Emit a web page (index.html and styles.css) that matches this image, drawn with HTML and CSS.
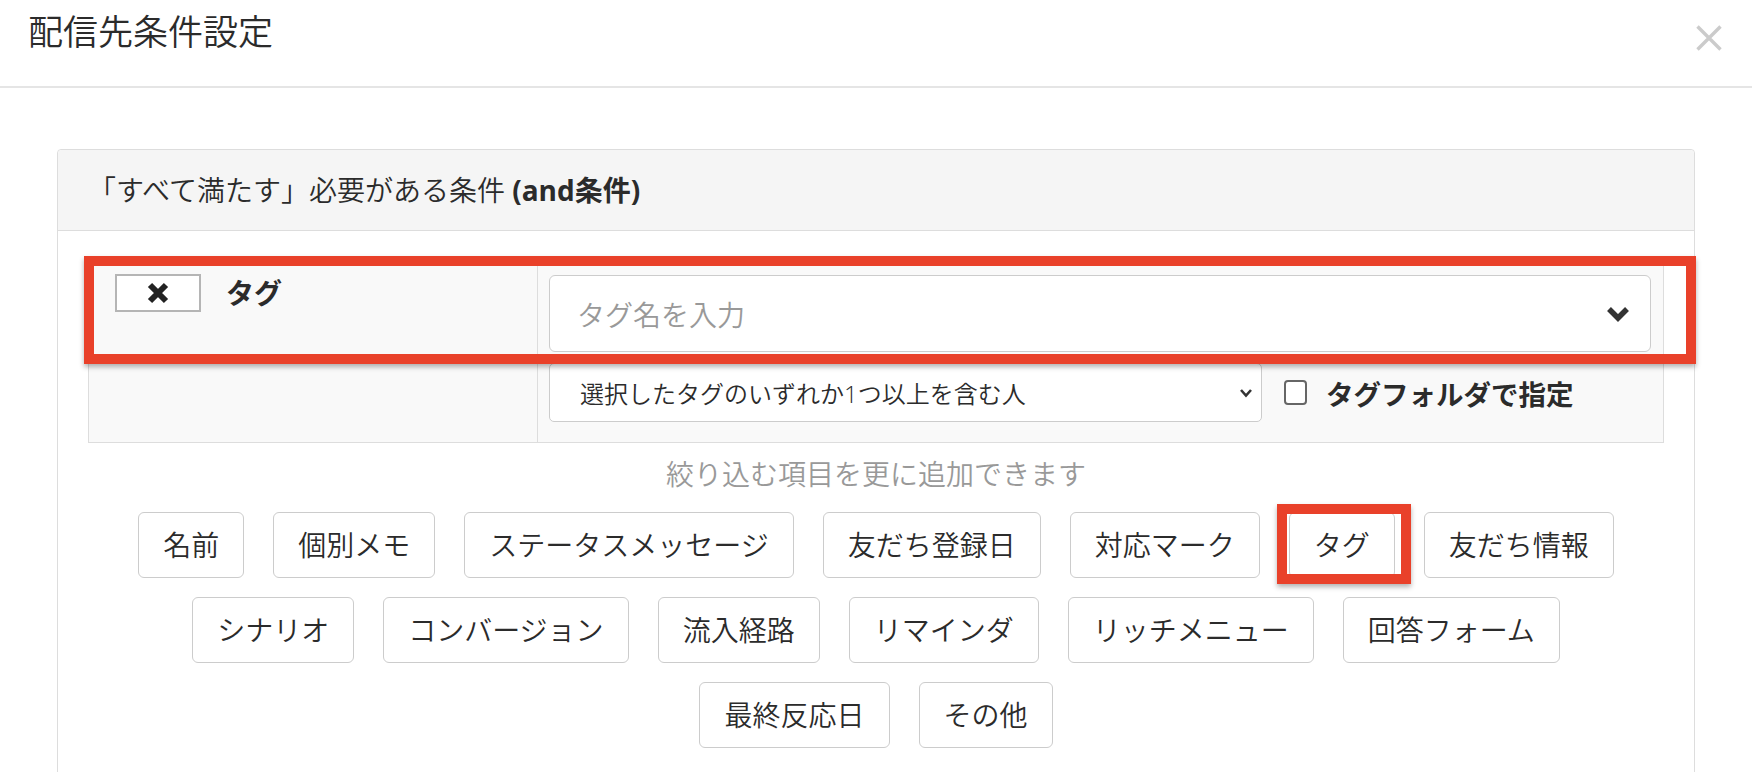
FILE: index.html
```html
<!DOCTYPE html>
<html lang="ja">
<head>
    <meta charset="UTF-8">
    <meta name="viewport" content="width=device-width, initial-scale=1.0">
    <title>配信先条件設定</title>
    <link rel="stylesheet" href="styles.css">
</head>
<body>
    <div class="modal">
        <div class="modal-header">
            <h4 class="modal-title">配信先条件設定</h4>
            <button class="close" type="button">
                <svg width="26" height="26" viewBox="0 0 26 26"><path d="M1.5 1.5L24.5 24.5M24.5 1.5L1.5 24.5" stroke="#cbcbcb" stroke-width="3.4"/></svg>
            </button>
        </div>

        <div class="modal-body">
            <div class="panel">
                <div class="panel-heading">「すべて満たす」必要がある条件 <b>(and条件)</b></div>
                <div class="panel-body">
                    <div class="cond">
                        <div class="cond-name">
                            <button class="remove" type="button">
                                <svg width="24" height="22" viewBox="0 0 24 22"><path d="M4 3L20 19M20 3L4 19" stroke="#222" stroke-width="6"/></svg>
                            </button>
                            <span class="cond-label">タグ</span>
                        </div>
                        <div class="cond-value">
                            <div class="tag-input">
                                <span class="placeholder">タグ名を入力</span>
                                <svg width="24" height="16" viewBox="0 0 24 16"><path d="M3 3L12 12L21 3" fill="none" stroke="#333" stroke-width="5.5"/></svg>
                            </div>
                            <div class="cond-options">
                                <div class="select">
                                    <span>選択したタグのいずれか1つ以上を含む人</span>
                                    <svg width="14" height="10" viewBox="0 0 14 10"><path d="M2 2L7 7.5L12 2" fill="none" stroke="#333" stroke-width="2.6"/></svg>
                                </div>
                                <label class="check"><span class="box"></span>タグフォルダで指定</label>
                            </div>
                        </div>
                        <div class="mark mark-cond"></div>
                    </div>

                    <p class="hint">絞り込む項目を更に追加できます</p>

                    <div class="adders">
                        <button type="button">名前</button>
                        <button type="button">個別メモ</button>
                        <button type="button">ステータスメッセージ</button>
                        <button type="button">友だち登録日</button>
                        <button type="button">対応マーク</button>
                        <button type="button" class="marked">タグ</button>
                        <button type="button">友だち情報</button>
                        <button type="button">シナリオ</button>
                        <button type="button">コンバージョン</button>
                        <button type="button">流入経路</button>
                        <button type="button">リマインダ</button>
                        <button type="button">リッチメニュー</button>
                        <button type="button">回答フォーム</button>
                        <button type="button">最終反応日</button>
                        <button type="button">その他</button>
                    </div>
                </div>
            </div>
        </div>
    </div>
</body>
</html>
```

FILE: styles.css
```css
body {
    margin: 0;
    padding: 0;
    background-color: #fff;
    color: #2b2b2b;
    font-family: "Open Sans", "Noto Sans CJK JP", sans-serif;
    font-weight: 350;
    overflow: hidden;
}

button {
    font-family: inherit;
    font-weight: inherit;
    color: inherit;
}

.modal-header {
    display: flex;
    justify-content: space-between;
    align-items: flex-start;
    height: 86px;
    padding: 0 30px 0 28px;
    border-bottom: 2px solid #e5e5e5;
}

.modal-title {
    margin: 0;
    padding-top: 9px;
    font-size: 35px;
    font-weight: 350;
    line-height: 46px;
}

.close {
    margin-top: 25px;
    padding: 0;
    border: none;
    background: none;
    line-height: 0;
}

.modal-body {
    padding: 61px 57px 0;
}

.panel {
    border: 1px solid #ddd;
    border-radius: 4px;
    background-color: #fff;
}

.panel-heading {
    padding: 20px 30px;
    font-size: 28px;
    line-height: 40px;
    background-color: #f5f5f5;
    border-bottom: 1px solid #ddd;
    border-radius: 4px 4px 0 0;
}

.panel-heading b {
    font-weight: 700;
}

.panel-body {
    padding: 29px 30px 40px;
}

/* condition row */
.cond {
    position: relative;
    display: grid;
    grid-template-columns: 448px 1fr;
    border: 1px solid #ddd;
    background-color: #f9f9f9;
}

.cond-name {
    display: flex;
    align-items: center;
    align-self: start;
    gap: 25px;
    padding: 13px 0 0 26px;
}

.remove {
    display: flex;
    justify-content: center;
    align-items: center;
    width: 86px;
    height: 38px;
    padding: 0;
    background-color: #fff;
    border: 2px solid #b5b5b5;
}

.cond-label {
    font-size: 28px;
    font-weight: 700;
    line-height: 38px;
}

.cond-value {
    border-left: 1px solid #ddd;
    padding: 14px 12px 20px 11px;
}

.tag-input {
    display: flex;
    justify-content: space-between;
    align-items: center;
    height: 77px;
    box-sizing: border-box;
    padding: 0 20px 0 27px;
    background-color: #fff;
    border: 1px solid #ccc;
    border-radius: 6px;
}

.placeholder {
    color: #999;
    font-size: 28px;
}

.cond-options {
    display: flex;
    align-items: center;
    margin-top: 11px;
}

.select {
    display: flex;
    justify-content: space-between;
    align-items: center;
    width: 713px;
    height: 59px;
    box-sizing: border-box;
    padding: 0 8px 0 30px;
    background-color: #fff;
    border: 1px solid #ccc;
    border-radius: 5px;
    font-size: 24px;
}

.check {
    display: flex;
    align-items: center;
    margin-left: 22px;
    font-size: 27.5px;
    font-weight: 700;
}

.box {
    width: 23px;
    height: 25px;
    margin-right: 19px;
    box-sizing: border-box;
    background-color: #fff;
    border: 2px solid #666;
    border-radius: 4px;
}

/* red annotation marks */
.mark,
.marked::after {
    position: absolute;
    border: 10px solid #e9412a;
    box-shadow: 0 3px 5px rgba(0, 0, 0, 0.3);
    pointer-events: none;
}

.mark-cond {
    left: -5px;
    top: -5px;
    width: 1612px;
    height: 108px;
    box-sizing: border-box;
}

.hint {
    margin: 11px 0 18px;
    text-align: center;
    color: #999;
    font-size: 28px;
    line-height: 40px;
}

.adders {
    display: flex;
    flex-wrap: wrap;
    justify-content: center;
    gap: 19px 29px;
    padding: 0 20px;
}

.adders button {
    position: relative;
    padding: 12px 24px;
    font-size: 28px;
    line-height: 40px;
    background-color: #fff;
    border: 1px solid #ccc;
    border-radius: 6px;
}

.marked::after {
    content: "";
    left: -13px;
    right: -17px;
    top: -9px;
    bottom: -7px;
}
```
